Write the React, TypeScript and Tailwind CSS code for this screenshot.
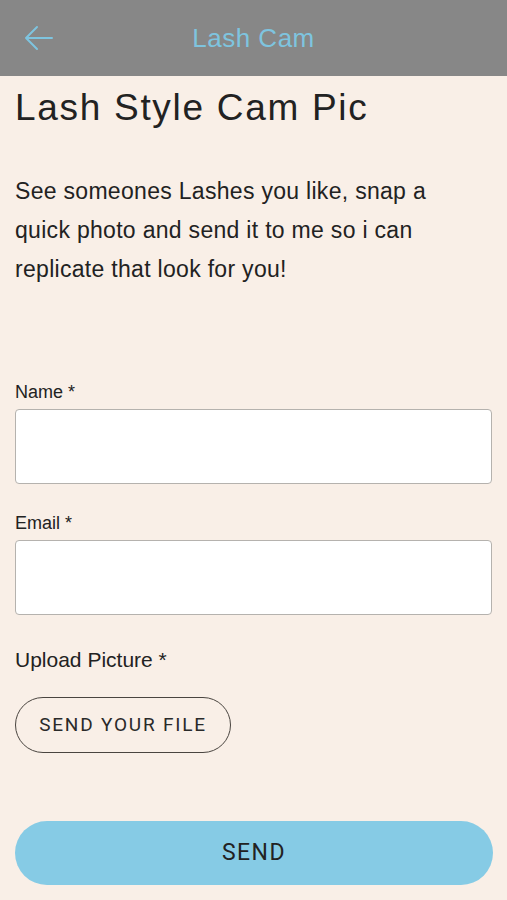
import React from 'react';

const Field = ({ label, className }: { label: string; className?: string }) => (
  <div className={className}>
    <label className="block text-[18px] leading-5 text-[#222]">{label}</label>
    <div className="mt-[7px] h-[75px] w-full rounded-[4px] border border-[#b5b2ae] bg-white" />
  </div>
);

const App = () => {
  return (
    <div className="min-h-[900px] w-[507px] bg-[#f9efe7] font-['Liberation_Sans',Arial,sans-serif]">
      <header className="relative flex h-[76px] items-center justify-center bg-[#878787]">
        <button className="absolute left-[24px] top-[24px] text-[#7ec4df]">
          <svg width="30" height="28" viewBox="0 0 30 28" fill="none" stroke="currentColor" strokeWidth="2" strokeLinecap="round">
            <path d="M2 14h26M2 14l11-11M2 14l11 11" />
          </svg>
        </button>
        <h1 className="text-[26px] tracking-[0.5px] text-[#7ec4df]">Lash Cam</h1>
      </header>

      <main className="px-[15px]">
        <h2 className="pt-[10px] text-[37px] leading-[44px] tracking-[1.7px] text-[#222]">Lash Style Cam Pic</h2>
        <p className="mt-[42px] w-[450px] text-[23px] leading-[39px] tracking-[0.3px] text-[#222]">
          See someones Lashes you like, snap a quick photo and send it to me so i can replicate that look for you!
        </p>

        <Field label="Name *" className="mt-[93px]" />
        <Field label="Email *" className="mt-[29px]" />

        <p className="mt-[33px] text-[21px] leading-6 text-[#222]">Upload Picture *</p>
        <button className="mt-[25px] h-[56px] w-[216px] rounded-full border-[1.5px] border-[#4a4540] font-['Roboto',sans-serif] text-[19px] tracking-[1.8px] text-[#2a2a2a]">
          SEND YOUR FILE
        </button>

        <button className="mt-[68px] h-[64px] w-[478px] rounded-full bg-[#86cbe5] font-['Roboto',sans-serif] text-[23px] tracking-[1.5px] text-[#222]">
          SEND
        </button>
      </main>
    </div>
  );
};

export default App;
